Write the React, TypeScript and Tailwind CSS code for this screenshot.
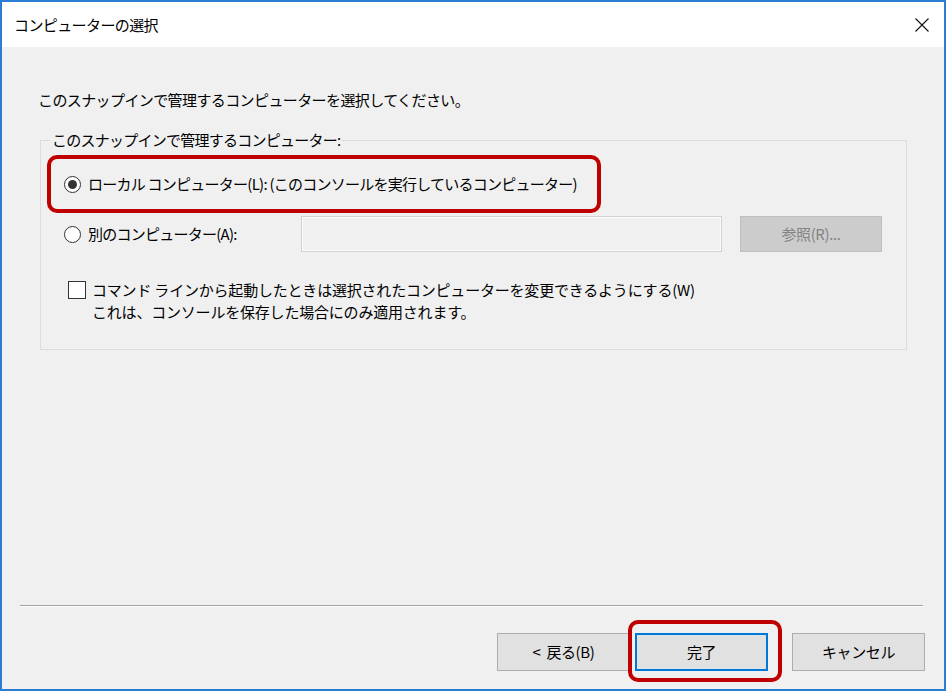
import React from 'react';

const Radio: React.FC<{ checked?: boolean }> = ({ checked }) => (
  <span className="flex h-[17px] w-[17px] shrink-0 items-center justify-center rounded-full border border-[#333333] bg-white">
    {checked && <span className="h-[9px] w-[9px] rounded-full bg-[#333333]" />}
  </span>
);

const WizardButton: React.FC<{ label: string; primary?: boolean; className?: string }> = ({ label, primary, className }) => (
  <button
    className={
      'flex h-[38px] w-[133px] items-center justify-center whitespace-pre bg-[#e1e1e1] text-[15px] leading-[20px] tracking-[-0.4px] ' +
      (primary ? 'border-2 border-[#0078d7] ' : 'border border-[#adadad] ') +
      (className ?? '')
    }
  >
    {label}
  </button>
);

export default function App() {
  return (
    <div className="h-[693px] w-[948px] bg-white font-['Noto_Sans_CJK_JP',sans-serif] text-black">
      <div className="flex h-[691px] w-[946px] flex-col border-2 border-[#2b7cd3]">
        <header className="flex h-[45px] shrink-0 items-center justify-between bg-white pl-[12px] pr-[15px]">
          <span className="text-[15px] leading-[20px] tracking-[-0.6px]">コンピューターの選択</span>
          <svg width="14" height="14" viewBox="0 0 14 14" fill="none" stroke="#111" strokeWidth="1.1">
            <path d="M0.5 0.5 L13.5 13.5 M13.5 0.5 L0.5 13.5" />
          </svg>
        </header>

        <main className="flex flex-1 flex-col bg-[#f0f0f0]">
          <p className="ml-[36px] mt-[43px] text-[15px] leading-[20px] tracking-[-0.6px]">
            このスナップインで管理するコンピューターを選択してください。
          </p>

          <fieldset className="ml-[38px] mt-[20px] w-[867px] border border-[#dcdcdc] pb-[26px]">
            <legend className="ml-[9px] px-[2px] text-[15px] leading-[20px] tracking-[-0.75px]">
              このスナップインで管理するコンピューター:
            </legend>

            <div className="ml-[6px] mt-[5px] flex h-[58px] w-[554px] items-center gap-[7px] rounded-[10px] border-4 border-[#c00000] pl-[13px]">
              <Radio checked />
              <span className="whitespace-pre text-[15px] leading-[20px] tracking-[-0.75px]">
                ローカル コンピューター(L): (このコンソールを実行しているコンピューター)
              </span>
            </div>

            <div className="mt-[3px] flex h-[36px] items-center pl-[23px]">
              <label className="flex w-[237px] items-center gap-[7px]">
                <Radio />
                <span className="text-[15px] leading-[20px] tracking-[-0.75px]">別のコンピューター(A):</span>
              </label>
              <div className="h-[36px] w-[421px] border border-[#d2d2d2] bg-[#f0f0f0] shadow-[inset_0_0_0_1px_#fafafa]" />
              <button className="ml-[18px] flex h-[36px] w-[142px] items-center justify-center border border-[#bfbfbf] bg-[#cccccc] text-[15px] leading-[20px] tracking-[-0.4px] text-[#838383]">
                参照(R)...
              </button>
            </div>

            <div className="mt-[27px] flex items-start pl-[27px]">
              <span className="mt-[2px] h-[18px] w-[18px] shrink-0 border border-[#333333] bg-white" />
              <div className="ml-[6px] whitespace-pre text-[15px] leading-[22px] tracking-[-0.2px]">
                <div>コマンド ラインから起動したときは選択されたコンピューターを変更できるようにする(W)</div>
                <div>これは、コンソールを保存した場合にのみ適用されます。</div>
              </div>
            </div>
          </fieldset>

          <div className="flex-1" />

          <div className="ml-[18px] mr-[21px] h-[2px] border-t border-b border-t-[#a0a0a0] border-b-white" />

          <div className="flex justify-end pb-[18px] pr-[19px] pt-[26px]">
            <WizardButton label="<  戻る(B)" />
            <div className="relative ml-[5px]">
              <WizardButton label="完了" primary />
              <div className="pointer-events-none absolute -bottom-[11px] -left-[7px] -right-[14px] -top-[13px] rounded-[10px] border-4 border-[#c00000]" />
            </div>
            <WizardButton label="キャンセル" className="ml-[24px]" />
          </div>
        </main>
      </div>
    </div>
  );
}
